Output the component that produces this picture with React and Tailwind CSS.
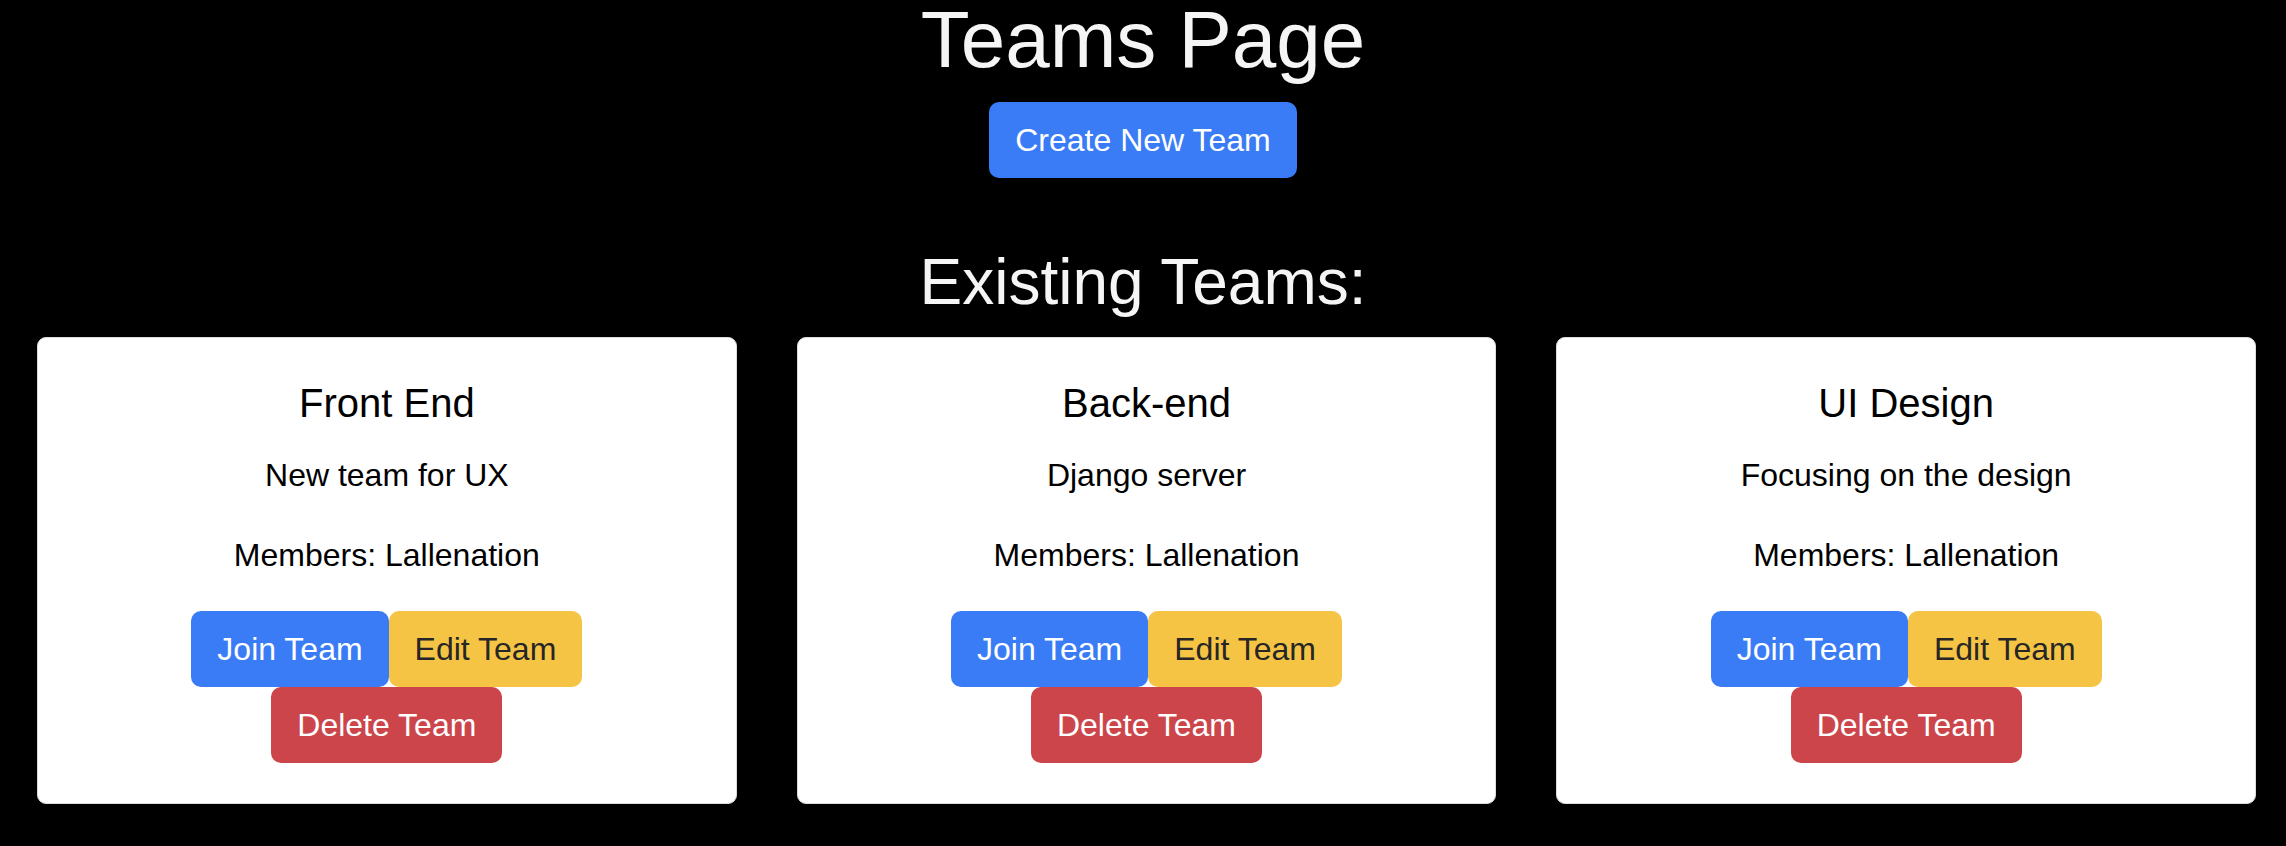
const teams = [
  { name: "Front End", description: "New team for UX", members: "Lallenation" },
  { name: "Back-end", description: "Django server", members: "Lallenation" },
  { name: "UI Design", description: "Focusing on the design", members: "Lallenation" },
];

const TeamCard = ({ team }) => {
  return (
    <div className="bg-white border border-[#dcdcdc] rounded-[9px] pt-[41px] pb-[40px] px-[32px] text-center text-black">
      {/* Title */}
      <h5 className="text-[40px] leading-[48px] mb-[24px]">{team.name}</h5>
      <p className="text-[32px] leading-[48px] mb-[32px]">{team.description}</p>
      <p className="text-[32px] leading-[48px] mb-[32px]">Members: {team.members}</p>

      {/* Actions */}
      <div className="flex justify-center">
        <button className="bg-[#3a7cf6] text-white text-[32px] leading-[48px] px-[24px] py-[12px] border-2 border-[#3a7cf6] rounded-[10px]">
          Join Team
        </button>
        <button className="bg-[#f6c445] text-[#262626] text-[32px] leading-[48px] px-[24px] py-[12px] border-2 border-[#f6c445] rounded-[10px]">
          Edit Team
        </button>
      </div>
      <div className="flex justify-center">
        <button className="bg-[#cc454b] text-white text-[32px] leading-[48px] px-[24px] py-[12px] border-2 border-[#cc454b] rounded-[10px]">
          Delete Team
        </button>
      </div>
    </div>
  );
};

const App = () => {
  return (
    <div className="min-h-screen bg-black font-['Liberation_Sans',Arial,sans-serif]">
      {/* Header */}
      <div className="flex flex-col items-center">
        <h1 className="text-[80px] leading-[80px] text-[#f5f5f5]">Teams Page</h1>
        <button className="mt-[22px] bg-[#3a7cf6] text-white text-[32px] leading-[48px] px-[24px] py-[12px] border-2 border-[#3a7cf6] rounded-[10px]">
          Create New Team
        </button>
        <h2 className="mt-[72px] text-[64px] leading-[64px] text-[#f5f5f5]">Existing Teams:</h2>
      </div>

      {/* Team Cards */}
      <div className="grid grid-cols-3 gap-[60px] pl-[37px] pr-[30px] mt-[23px]">
        {teams.map((team) => (
          <TeamCard key={team.name} team={team} />
        ))}
      </div>
    </div>
  );
};

export default App;
